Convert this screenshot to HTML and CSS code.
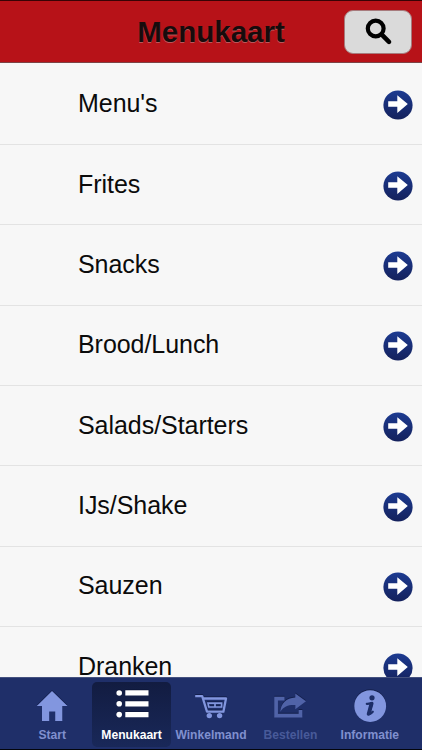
FILE: index.html
```html
<!DOCTYPE html>
<html lang="nl">
<head>
<meta charset="utf-8">
<title>Menukaart</title>
<link rel="stylesheet" href="styles.css">
</head>
<body>
<svg class="defs" width="0" height="0" aria-hidden="true">
  <defs>
    <linearGradient id="disc" x1="0" y1="0" x2="0" y2="1"><stop offset="0" stop-color="#1d3b91"/><stop offset="1" stop-color="#14215c"/></linearGradient>
    <symbol id="arrow" viewBox="0 0 30 30">
      <circle cx="15" cy="15" r="14.6" fill="url(#disc)"/>
      <path d="M5.2 11.2H14.3V5.3L24.8 14.1L14.3 22.9V16.8H5.2Z" fill="#fff"/>
    </symbol>
  </defs>
</svg>
<div class="app">
  <header class="bar">
    <h1 class="title">Menukaart</h1>
    <button class="search" aria-label="Zoeken">
      <svg width="28" height="28" viewBox="0 0 28 28" fill="none" stroke="#000">
        <circle cx="10.7" cy="10.5" r="7.9" stroke-width="4.2"/>
        <path d="M16.8 16.6L24 23.8" stroke-width="4.6" stroke-linecap="round"/>
      </svg>
    </button>
  </header>
  <main class="list">
    <div class="row"><span>Menu's</span><svg class="go"><use href="#arrow"/></svg></div>
    <div class="row"><span>Frites</span><svg class="go"><use href="#arrow"/></svg></div>
    <div class="row"><span>Snacks</span><svg class="go"><use href="#arrow"/></svg></div>
    <div class="row"><span>Brood/Lunch</span><svg class="go"><use href="#arrow"/></svg></div>
    <div class="row"><span>Salads/Starters</span><svg class="go"><use href="#arrow"/></svg></div>
    <div class="row"><span>IJs/Shake</span><svg class="go"><use href="#arrow"/></svg></div>
    <div class="row"><span>Sauzen</span><svg class="go"><use href="#arrow"/></svg></div>
    <div class="row"><span>Dranken</span><svg class="go"><use href="#arrow"/></svg></div>
  </main>
  <nav class="tabs">
    <div class="tab">
      <svg class="icon" viewBox="0 0 40 40" fill="currentColor"><path d="M20 4L35.5 19H30.3V34H23.2V24.5H17.2V34H10V19H4.8Z"/></svg>
      <span>Start</span>
    </div>
    <div class="tab active">
      <svg class="icon" viewBox="0 0 40 40" fill="currentColor"><circle cx="7.2" cy="6" r="2.8"/><circle cx="7.2" cy="16.8" r="2.8"/><circle cx="7.2" cy="27.6" r="2.8"/><path d="M13.3 3.3H36.5V8.5H13.3ZM13.3 14.2H36.5V19.4H13.3ZM13.3 25H36.5V30.2H13.3Z"/></svg>
      <span>Menukaart</span>
    </div>
    <div class="tab">
      <svg class="icon" viewBox="0 0 40 40" fill="none" stroke="currentColor">
        <path d="M4.2 9.2H11.2L16 24.7H32.4L35 11.5H12.5" stroke-width="2.3" stroke-linejoin="round"/>
        <path d="M17 16.2H30.6V20H17.8ZM24 16V20" stroke-width="1.7"/>
        <circle cx="18.3" cy="28.6" r="2.7" fill="currentColor" stroke="none"/><circle cx="28.6" cy="28.6" r="2.7" fill="currentColor" stroke="none"/>
      </svg>
      <span>Winkelmand</span>
    </div>
    <div class="tab disabled">
      <svg class="icon" viewBox="0 0 40 40">
        <path d="M14.5 11.6H6.1V28.6H30.5V23" fill="none" stroke="currentColor" stroke-width="3.7"/>
        <path d="M25.3 6.4L36 14.3L25.3 22.2V18.1C18.7 17.7 14 19.2 10.3 24.7C11 16.7 16 11.2 25.3 10.6Z" fill="currentColor"/>
      </svg>
      <span>Bestellen</span>
    </div>
    <div class="tab">
      <svg class="icon" viewBox="0 0 40 40">
        <circle cx="20.2" cy="19.1" r="15.9" fill="currentColor"/>
        <circle cx="22" cy="10.8" r="2.6" fill="#1d2e68"/>
        <path d="M16.8 16.8C19.5 17 21.5 15.9 22.1 15.9C22.8 15.9 22.2 17.4 21.8 18.7L19.7 26.3C19.5 27.2 20.5 26.9 22.8 24.7" fill="none" stroke="#1d2e68" stroke-width="2.2" stroke-linecap="round"/>
        <path d="M21.2 17L18.5 27" stroke="#1d2e68" stroke-width="3.5" stroke-linecap="round"/>
      </svg>
      <span>Informatie</span>
    </div>
  </nav>
</div>
</body>
</html>
```
FILE: styles.css
```css
* { box-sizing: border-box; }
body {
  margin: 0;
  font-family: "Liberation Sans", Arial, sans-serif;
  background: #000;
}
.defs { display: block; }
.app {
  height: 750px;
  display: grid;
  grid-template-rows: 63px 1fr 73px;
  overflow: hidden;
}
.bar {
  display: grid;
  grid-template-columns: 1fr auto 1fr;
  background: #b71218;
  border-top: 1px solid #380305;
  border-bottom: 1px solid #7c4345;
}
.title {
  grid-column: 2;
  margin: 14px 0 0;
  font-size: 29.5px;
  line-height: 34px;
  color: #170b0c;
  text-shadow: 0 1px 0 rgba(190, 110, 112, .75);
}
.search {
  justify-self: end;
  width: 68px;
  height: 44px;
  margin: 9px 10px 0 0;
  padding: 0 0 0 1px;
  display: grid;
  place-items: center;
  background: #dadada;
  border: 1px solid #a77b7d;
  border-radius: 9px;
}
.list {
  overflow: hidden;
  background: #f7f7f7;
  padding-top: 1.6px;
}
.row {
  height: 80.35px;
  padding: 0 9px 0 78px;
  display: flex;
  align-items: center;
  justify-content: space-between;
  border-bottom: 1px solid #e3e3e3;
  font-size: 25px;
  letter-spacing: -.05px;
  color: #0b0b0b;
}
.row span { line-height: 30px; margin-top: -2px; }
.go { width: 30px; height: 30px; margin-top: 2px; }
.tabs {
  display: flex;
  padding: 4px 12.5px 0;
  background: #1f2f69;
  border-top: 1px solid #44517f;
  border-bottom: 1px solid #03050c;
}
.tab {
  flex: 1 1 0;
  min-width: 0;
  height: 65px;
  padding-top: 5px;
  display: flex;
  flex-direction: column;
  align-items: center;
  border-radius: 5px;
  color: #8296df;
  font-size: 12.1px;
  font-weight: bold;
  line-height: 16px;
  white-space: nowrap;
}
.tab span { color: #8090cf; }
.icon { width: 40px; height: 40px; filter: drop-shadow(0 -1px 0 rgba(8, 16, 48, .5)); }
.active { background: linear-gradient(#121c41, #192859); color: #fff; }
.active span { color: #fff; }
.disabled { color: #5063a8; }
.disabled span { color: #485a99; }
```
